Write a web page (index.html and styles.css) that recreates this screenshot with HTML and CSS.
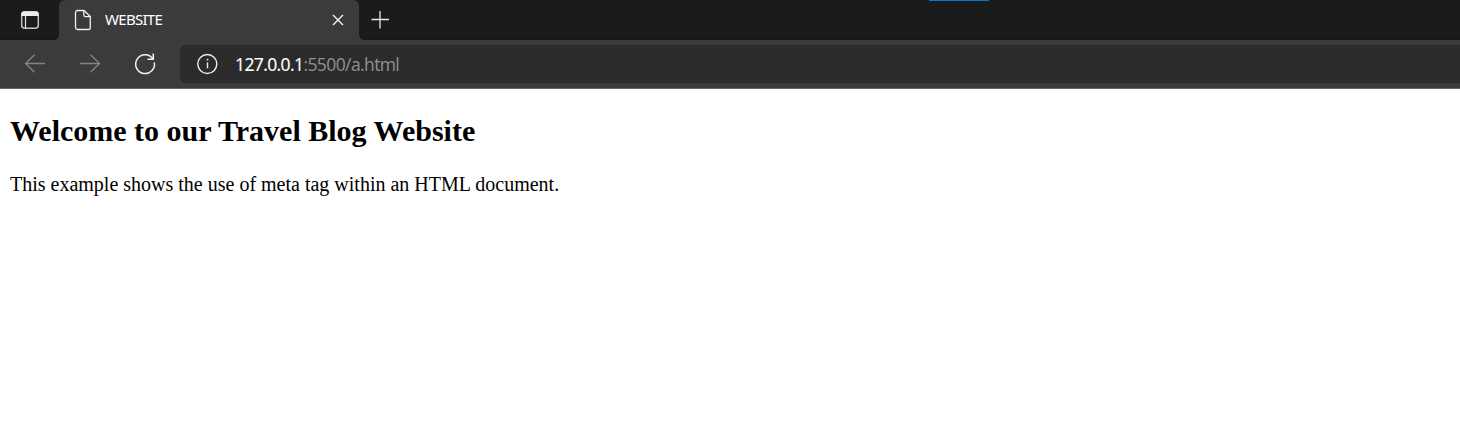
FILE: index.html
```html
<!DOCTYPE html>
<html lang="en">
<head>
<meta charset="utf-8">
<title>WEBSITE</title>
<link rel="stylesheet" href="styles.css">
</head>
<body>
<header class="browser">
  <div class="tabbar">
    <span class="progress"></span>
    <div class="side side-left">
      <svg width="20" height="20" viewBox="0 0 20 20" fill="none">
        <rect x="1.700" y="1.700" width="16.600" height="16.600" rx="3" stroke="#c4c4c4" stroke-width="1.500"/>
        <path d="M1.500 6V4a2.500 2.500 0 0 1 2.500-2.500h12A2.500 2.500 0 0 1 18.500 4v2z" fill="#ececec"/>
        <path d="M5.500 6v12" stroke="#e4e4e4" stroke-width="1.200"/>
      </svg>
    </div>
    <div class="tab">
      <svg class="page-icon" width="18" height="22" viewBox="0 0 18 22" fill="none" stroke="#f0f0f0" stroke-width="1.300" stroke-linejoin="round">
        <path d="M3.500 1.500H10L16.300 7.500V18.500a2 2 0 0 1-2 2H3.500a2 2 0 0 1-2-2v-15a2 2 0 0 1 2-2z"/>
        <path d="M9.800 1.500V6a1.700 1.700 0 0 0 1.700 1.700h4.800"/>
      </svg>
      <span class="tab-title">WEBSITE</span>
      <svg class="close" width="12" height="12" viewBox="0 0 12 12" stroke="#f5f5f5" stroke-width="1.400"><path d="M1 1l10 10M11 1L1 11"/></svg>
    </div>
    <div class="side side-right">
      <svg width="18" height="18" viewBox="0 0 18 18" stroke="#e8e8e8" stroke-width="1.300"><path d="M-.5 8.500h17.500M8 0v17.500"/></svg>
    </div>
  </div>
  <div class="toolbar">
    <svg class="nav" width="22" height="20" viewBox="0 0 22 20" fill="none" stroke="#858585" stroke-width="1.300"><path d="M21 9.500H1.500M10.500 .8L1.500 9.500l9 8.700"/></svg>
    <svg class="nav" width="22" height="20" viewBox="0 0 22 20" fill="none" stroke="#858585" stroke-width="1.300"><path d="M1 9.500h19.500M11.500 .8l9 8.700-9 8.700"/></svg>
    <svg class="nav" width="22" height="22" viewBox="0 0 22 22" fill="none" stroke="#f2f2f2" stroke-width="1.500"><path d="M20.300 9.300A9.400 9.400 0 1 1 18.800 5.800M19.300 .5v5.800h-5.800"/></svg>
    <div class="address">
      <svg width="22" height="22" viewBox="0 0 22 22" fill="none" stroke="#ececec" stroke-width="1.400"><circle cx="11.300" cy="11" r="9.500"/><path d="M11.500 9.400v5.900"/><circle cx="11.500" cy="6.700" r=".9" fill="#ececec" stroke="none"/></svg>
      <span class="url"><span class="host">127.0.0.1</span><span class="path">:5500/a.html</span></span>
    </div>
  </div>
</header>
<main class="page">
  <h2>Welcome to our Travel Blog Website</h2>
  <p>This example shows the use of meta tag within an HTML document.</p>
</main>
</body>
</html>
```
FILE: styles.css
```css
* { box-sizing: border-box; }
body {
  margin: 0;
  background: #fff;
  overflow: hidden;
}
.browser {
  height: 89px;
  background: #3b3b3b;
  border-bottom: 1px solid #666;
  font-family: "Open Sans", "Noto Sans", sans-serif;
}
svg { display: block; flex: none; overflow: visible; }
.tabbar {
  position: relative;
  display: flex;
  height: 40px;
  background: linear-gradient(#1b1b1b 50%, #3b3b3b 50%);
}
.progress {
  position: absolute;
  left: 929px;
  top: 0;
  width: 60px;
  height: 1px;
  background: #0078d4;
}
.side { background: #1b1b1b; box-shadow: inset 0 -3px 3px -2px #141414; }
.side-left {
  width: 59px;
  padding: 10px 0 0 20px;
  border-bottom-right-radius: 6px;
}
.side-right {
  flex: 1;
  padding: 11px 0 0 13px;
  border-bottom-left-radius: 6px;
}
.tab {
  display: flex;
  align-items: center;
  width: 300px;
  padding: 0 15px;
  background: #3b3b3b;
  border-radius: 6px 6px 0 0;
}
.tab-title {
  margin-left: 13px;
  padding-bottom: 2px;
  font-family: "Noto Sans", sans-serif;
  font-size: 15px;
  line-height: 20px;
  letter-spacing: -0.7px;
  color: #fff;
}
.close { margin-left: auto; }
.toolbar {
  display: flex;
  align-items: center;
  height: 48px;
  padding-left: 24px;
}
.nav { margin-right: 33px; }
.address {
  display: flex;
  align-items: center;
  flex: 1;
  height: 38px;
  margin-left: -9px;
  padding-left: 16px;
  background: #2b2b2b;
  border-radius: 5px 0 0 5px;
}
.url {
  margin-left: 17px;
  padding-bottom: 1px;
  font-size: 17.5px;
  line-height: 24px;
  letter-spacing: -0.6px;
  white-space: nowrap;
}
.host { color: #fff; -webkit-text-stroke: 0.2px #fff; }
.path { color: #919191; }
.page {
  padding: 0 10px;
  font-family: "Liberation Serif", serif;
  font-size: 20px;
  line-height: 23px;
  color: #000;
}
.page h2 {
  margin: 0;
  padding-top: 25px;
  font-size: 30px;
  line-height: 34px;
}
.page p { margin: 25px 0 0; }
```
